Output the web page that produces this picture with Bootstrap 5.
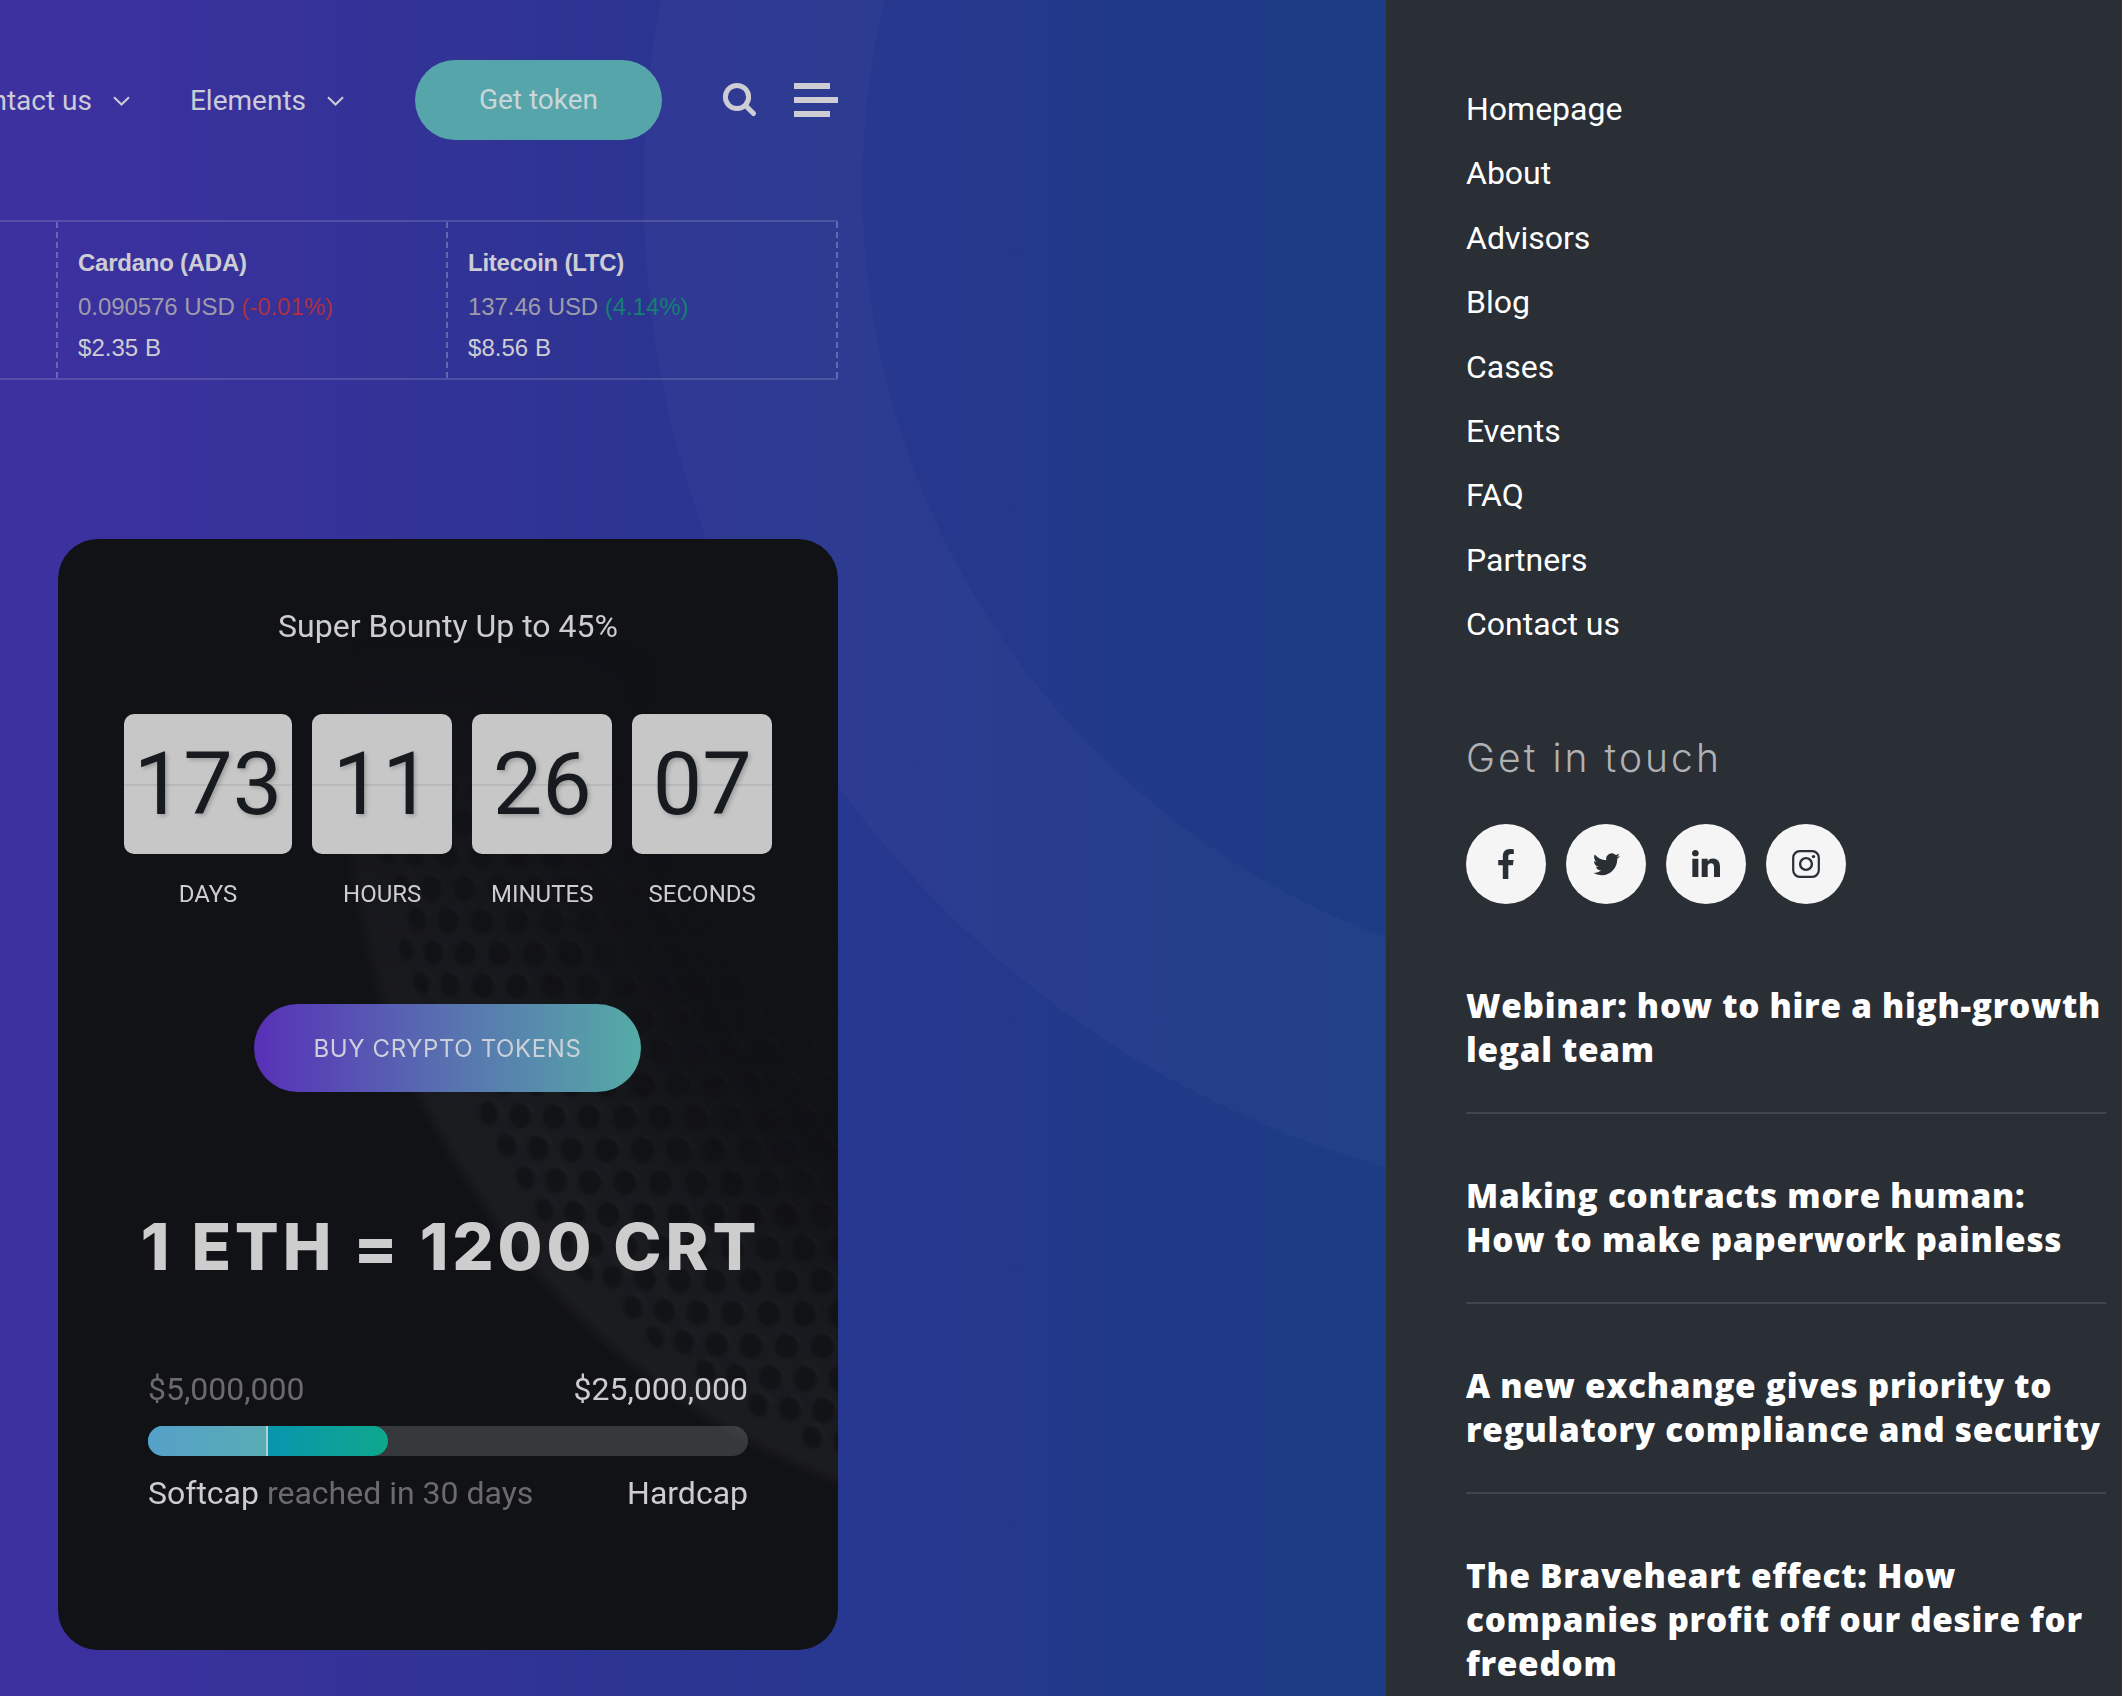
<!DOCTYPE html>
<html lang="en">
<head>
<meta charset="utf-8">
<meta name="viewport" content="width=device-width, initial-scale=1">
<title>Crypto tokens</title>
<link href="https://cdn.jsdelivr.net/npm/bootstrap@5.3.0/dist/css/bootstrap.min.css" rel="stylesheet">
<style>
body{font-family:Roboto,"Liberation Sans",sans-serif;background:#1c3c84}
.page-wrap{height:1696px}
.stage{width:1386px;background:linear-gradient(90deg,#3c319f 0,#3c319f 60px,#2d3492 620px,#27388f 880px,#22398a 1080px,#1c3c84 1386px)}
.halo{left:643px;top:0;width:743px;height:1200px;z-index:0}
.main-col{width:838px;z-index:1;padding-top:60px;color:#cdcdd3}
.top-nav{height:80px;font-size:28px;white-space:nowrap}
.top-nav>*,.top-nav svg{flex-shrink:0}
.top-nav a{color:#cccbd8}
.nav-entry{gap:21px;padding-top:1px}
.btn-token{width:247px;height:80px;border-radius:40px;background:#55a5aa;color:#c9d6d8!important}
.ticker{margin-top:80px;height:160px;border-top:2px solid rgba(255,255,255,.14);border-bottom:2px solid rgba(255,255,255,.14);font:24px/44px "Liberation Sans",Arial,sans-serif;letter-spacing:-.06px}
.coin{flex:0 0 390px;border-right:2px dashed rgba(255,255,255,.25);padding:19px 0 0 20px}
.coin b{letter-spacing:-.25px}
.coin .price{color:#9e9caa}.coin .down{color:#ad3040}.coin .up{color:#147f72}
.coin .cap{line-height:38px;letter-spacing:.04px}
.bounty{margin:159px 0 0 58px;width:780px;height:1111px;border-radius:40px;background:#111216;padding-top:63px;font-size:32px;color:#cdcdcd}
.mesh{inset:0;width:780px;height:1111px}
.bounty-title{line-height:48px}
.flip-row{gap:20px;margin-top:64px}
.flip{min-width:140px;height:140px;padding:0 10px;border-radius:10px;background:linear-gradient(#c7c7c7 70px,#b9b9b9 70px,#b9b9b9 72px,#c7c7c7 72px);color:#171a1f;font-size:88px;line-height:140px;text-shadow:2px 2px 4px rgba(0,0,0,.22)}
.flip-label{margin-top:22px;font-size:24px;line-height:36px}
.btn-buy{margin:92px 1px 0 0;width:387px;height:88px;border-radius:44px;background:linear-gradient(90deg,#5730b7,#5876b0 54%,#55aba6);color:#ccd0da;font:400 24px/89px Inter,sans-serif;letter-spacing:.6px}
.rate{margin:115px 0 0 5px;font:800 65px/80px Inter,sans-serif;letter-spacing:3.850px;white-space:nowrap}
.goal{width:600px;margin-top:82px;line-height:40px}
.faded{color:#6b6b6e}
.cap-bar{height:30px;margin:17px 0;border-radius:15px;background:rgba(255,255,255,.16)}
.cap-fill{border-radius:0 15px 15px 0;background:linear-gradient(90deg,#0895ae 50%,#0ea88c)}
.cap-soft{background:linear-gradient(90deg,#56a0c9,#58acb4);border-right:2px solid #b5d0d5}
.side{width:736px;background:#2a2e35;padding:77px 16px 0 80px;color:#fff}
.side-menu{font-size:32px;line-height:64.4px}
.touch{margin-top:76px;font:350 39px/50px Inter,sans-serif;letter-spacing:3.050px;color:#b0b1b4}
.social{gap:20px;margin-top:41px}
.social a{width:80px;height:80px;background:#f5f5f5;color:#2a2e35}
.news{margin-top:79px;font:800 33.3px/44px "Open Sans",sans-serif;letter-spacing:.72px;white-space:nowrap}
.news a{padding-bottom:41px;margin-bottom:59px;border-bottom:2px solid #41454d}
.news a:last-child{border:0}
</style>
</head>
<body class="overflow-hidden">
<div class="page-wrap d-flex overflow-hidden">
  <main class="stage position-relative overflow-hidden flex-shrink-0">
    <svg class="halo position-absolute" viewBox="643 0 743 1200"><circle cx="1662" cy="187" r="909" fill="none" stroke="#fff" stroke-opacity=".023" stroke-width="219"/></svg>
    <div class="main-col position-relative">
      <nav class="top-nav d-flex align-items-center justify-content-end">
        <a class="nav-entry d-flex align-items-center text-decoration-none" href="#">Contact us
          <svg width="17" height="10" viewBox="0 0 17 10" fill="none" stroke="currentColor" stroke-width="2"><path d="M1 1.2 8.5 8.5 16 1.2"/></svg></a>
        <a class="nav-entry d-flex align-items-center text-decoration-none" style="margin-left:60px" href="#">Elements
          <svg width="17" height="10" viewBox="0 0 17 10" fill="none" stroke="currentColor" stroke-width="2"><path d="M1 1.2 8.5 8.5 16 1.2"/></svg></a>
        <a class="btn-token d-flex align-items-center justify-content-center text-decoration-none" style="margin-left:71px" href="#">Get token</a>
        <svg style="margin-left:60px" width="36" height="36" viewBox="722 82 36 36" fill="none" stroke="#cdcdd3" stroke-linecap="round"><circle cx="737" cy="97" r="11.6" stroke-width="5"/><path d="M746 106l7.500 7.500" stroke-width="5.200"/></svg>
        <svg style="margin-left:36px" width="44" height="34" viewBox="0 0 44 34" fill="#cdcdd3"><path d="M0 0h36v6H0zM0 14h44v6H0zM0 28h36v6H0z"/></svg>
      </nav>
      <section class="ticker d-flex justify-content-end">
        <div class="coin"></div>
        <div class="coin"><b class="d-block">Cardano (ADA)</b><div class="price">0.090576 USD <span class="down">(-0.01%)</span></div><div class="cap">$2.35 B</div></div>
        <div class="coin"><b class="d-block">Litecoin (LTC)</b><div class="price">137.46 USD <span class="up">(4.14%)</span></div><div class="cap">$8.56 B</div></div>
      </section>
      <section class="bounty position-relative overflow-hidden">
        <svg class="mesh position-absolute" viewBox="58 539 780 1111">
          <defs>
            <radialGradient id="shell" gradientUnits="userSpaceOnUse" cx="1108" cy="770" r="766"><stop offset=".6" stop-color="#191b1f" stop-opacity="0"/><stop offset=".84" stop-color="#1a1c20" stop-opacity=".9"/><stop offset=".985" stop-color="#1b1c20"/><stop offset="1" stop-color="#18191d" stop-opacity=".3"/></radialGradient>
            <linearGradient id="fade" gradientUnits="userSpaceOnUse" x1="0" y1="640" x2="0" y2="1120"><stop offset="0" stop-color="#000"/><stop offset=".55" stop-color="#aaa"/><stop offset="1" stop-color="#fff"/></linearGradient>
            <mask id="veil"><rect x="58" y="539" width="780" height="1111" fill="url(#fade)"/></mask>
            <filter id="soft" x="0" y="0" width="1" height="1" color-interpolation-filters="sRGB"><feGaussianBlur stdDeviation="1.500"/></filter>
          </defs>
          <g mask="url(#veil)"><circle cx="1108" cy="770" r="766" fill="url(#shell)"/><g id="holes" filter="url(#soft)"></g></g>
        </svg>
        <div class="position-relative d-flex flex-column align-items-center">
          <div class="bounty-title">Super Bounty Up to 45%</div>
          <div class="flip-row d-flex text-center">
            <div><div class="flip">173</div><div class="flip-label">DAYS</div></div>
            <div><div class="flip">11</div><div class="flip-label">HOURS</div></div>
            <div><div class="flip">26</div><div class="flip-label">MINUTES</div></div>
            <div><div class="flip">07</div><div class="flip-label">SECONDS</div></div>
          </div>
          <a class="btn-buy d-block text-center text-decoration-none" href="#">BUY CRYPTO TOKENS</a>
          <div class="rate">1 ETH = 1200 CRT</div>
          <div class="goal">
            <div class="d-flex justify-content-between"><span class="faded">$5,000,000</span><span>$25,000,000</span></div>
            <div class="cap-bar overflow-hidden"><div class="cap-fill h-100" style="width:40%"><div class="cap-soft h-100" style="width:50%"></div></div></div>
            <div class="d-flex justify-content-between"><span>Softcap <span class="faded">reached in 30 days</span></span><span>Hardcap</span></div>
          </div>
        </div>
      </section>
    </div>
  </main>
  <aside class="side flex-shrink-0 overflow-hidden">
    <ul class="side-menu list-unstyled mb-0">
      <li>Homepage</li><li>About</li><li>Advisors</li><li>Blog</li><li>Cases</li><li>Events</li><li>FAQ</li><li>Partners</li><li>Contact us</li>
    </ul>
    <div class="touch">Get in touch</div>
    <div class="social d-flex">
      <a class="rounded-circle d-flex align-items-center justify-content-center" href="#" aria-label="Facebook"><svg width="16" height="30" viewBox="479 0 864 1664" fill="currentColor"><path d="M1343 12v264h-157q-86 0-116 36t-30 108v189h293l-39 296h-254v759h-306v-759h-255v-296h255v-218q0-186 104-288.500t277-102.500q147 0 228 12z"/></svg></a>
      <a class="rounded-circle d-flex align-items-center justify-content-center" href="#" aria-label="Twitter"><svg width="27" height="27" viewBox="0 0 16 16" fill="currentColor"><path d="M5.026 15c6.038 0 9.341-5.003 9.341-9.334 0-.14 0-.282-.006-.422A6.685 6.685 0 0 0 16 3.542a6.658 6.658 0 0 1-1.889.518 3.301 3.301 0 0 0 1.447-1.817 6.533 6.533 0 0 1-2.087.793A3.286 3.286 0 0 0 7.875 6.030a9.325 9.325 0 0 1-6.767-3.429 3.289 3.289 0 0 0 1.018 4.382A3.323 3.323 0 0 1 .64 6.575v.045a3.288 3.288 0 0 0 2.632 3.218 3.203 3.203 0 0 1-.865.115 3.230 3.230 0 0 1-.614-.057 3.283 3.283 0 0 0 3.067 2.277A6.588 6.588 0 0 1 .78 13.580a6.320 6.320 0 0 1-.78-.045A9.344 9.344 0 0 0 5.026 15z"/></svg></a>
      <a class="rounded-circle d-flex align-items-center justify-content-center" href="#" aria-label="LinkedIn"><svg width="28" height="27" viewBox="0 148 1536 1468" fill="currentColor"><path d="M349 625v991h-330v-991h330zm21-306q1 73-50.500 122t-135.500 49h-2q-82 0-132-49t-50-122q0-74 51.500-122.500t134.500-48.500 133 48.500 51 122.500zm1166 729v568h-329v-530q0-105-40.500-164.500t-126.500-59.500q-63 0-105.500 34.500t-63.500 85.500q-11 30-11 81v553h-329q2-399 2-647t-1-296l-1-48h329v144h-2q20-32 41-56t56.500-52 87-43.500 114.500-15.500q171 0 275 113.500t104 332.500z"/></svg></a>
      <a class="rounded-circle d-flex align-items-center justify-content-center" href="#" aria-label="Instagram"><svg width="28" height="28" viewBox="0 0 28 28" fill="none" stroke="currentColor"><rect x="1.200" y="1.200" width="25.600" height="25.600" rx="6.500" stroke-width="2.200"/><circle cx="14" cy="14" r="5.900" stroke-width="2.400"/><circle cx="21.500" cy="6.600" r="1.700" fill="currentColor" stroke="none"/></svg></a>
    </div>
    <div class="news">
      <a class="d-block text-white text-decoration-none">Webinar: how to hire a high-growth<br>legal team</a>
      <a class="d-block text-white text-decoration-none">Making contracts more human:<br>How to make paperwork painless</a>
      <a class="d-block text-white text-decoration-none">A new exchange gives priority to<br>regulatory compliance and security</a>
      <a class="d-block text-white text-decoration-none">The Braveheart effect: How<br>companies profit off our desire for<br>freedom</a>
    </div>
  </aside>
</div>
<script src="https://cdn.jsdelivr.net/npm/bootstrap@5.3.0/dist/js/bootstrap.bundle.min.js"></script>
<script>
// Perforated shell: staggered rows of holes that crowd together towards the rim
(function () {
  let out = '';
  for (let row = 0; row < 22; row++) {
    const y = 790 + row * 32.4, dy = y - 770;
    if (dy > 740) break;
    const rim = 1108 - Math.sqrt(762 * 762 - dy * dy), low = Math.max(0, dy) / 600;
    for (let x = 300 + (row % 2) * 18; x < 880; x += 36) {
      const d = x - rim - 8 - low * 12;
      if (d < 8) continue;
      const k = Math.exp(-d / 45), px = x + 20 * k, py = y - 16 * k * low + 6 * low;
      const rx = 11.5 - 6 * k, ry = 12.5 - 2 * k;
      const r = Math.hypot(px - 1108, py - 770), o = Math.max(0, Math.min(.8, (r - 430) / 180));
      out += `<ellipse cx="${px.toFixed(1)}" cy="${py.toFixed(1)}" rx="${rx.toFixed(1)}" ry="${ry.toFixed(1)}" transform="rotate(${(-45 * k * low - 6).toFixed(1)} ${px.toFixed(1)} ${py.toFixed(1)})" fill="#101114" fill-opacity="${o.toFixed(2)}"/>`;
      out += `<path d="M${px.toFixed(1)} ${(py - 14).toFixed(1)}q12 2 14 13" fill="none" stroke="#fff" stroke-opacity=".02" stroke-width="3"/>`;
    }
  }
  document.getElementById('holes').innerHTML = out;
})();
</script>
</body>
</html>
